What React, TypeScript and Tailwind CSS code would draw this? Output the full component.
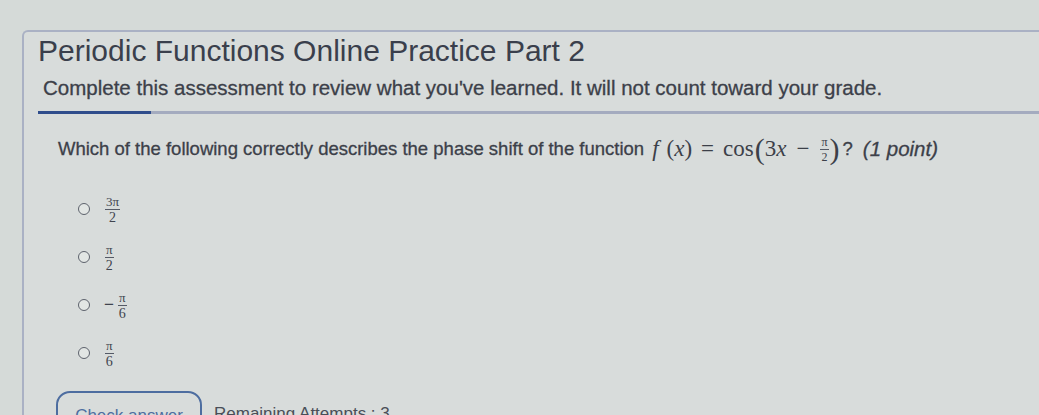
import React from "react";

const Frac = ({ n, d, small }: { n: string; d: string; small?: boolean }) => (
  <span className="inline-flex flex-col items-center align-middle leading-none mx-[1px]" style={{ fontFamily: '"Liberation Serif", serif' }}>
    <span className={small ? "text-[12px] leading-[12px] px-[1px]" : "text-[13px] leading-[13px] px-[1px]"}>{n}</span>
    <span className="block w-full h-px bg-[#555a66] my-[1px]" />
    <span className={small ? "text-[12px] leading-[12px]" : "text-[14px] leading-[13px]"}>{d}</span>
  </span>
);

const Option = ({ children }: { children: React.ReactNode }) => (
  <div className="flex items-center h-[22px] gap-[14px]">
    <span className="w-[12px] h-[12px] rounded-full border-[1.5px] border-[#5d626c] bg-[#e2e6e4]" />
    <span className="flex items-center text-[#40444e]">{children}</span>
  </div>
);

export default function App() {
  return (
    <div className="w-[1039px] h-[415px] overflow-hidden bg-[#d5dad8] pt-[30px] pl-[22px]" style={{ fontFamily: '"Liberation Sans", Arial, sans-serif' }}>
      <div className="border-t-2 border-l-2 border-[#aab1c4] rounded-tl-[6px] h-[420px] bg-[#d8dcdb]">
        <div className="pl-[14px] pt-[3px]">
          <h1 className="text-[30px] leading-[32px] text-[#3a3f4c]">Periodic Functions Online Practice Part 2</h1>
          <p className="text-[20.5px] leading-[24px] mt-[9px] ml-[5px] text-[#3c4049]" style={{ WebkitTextStroke: "0.3px #3c4049" }}>
            Complete this assessment to review what you've learned. It will not count toward your grade.
          </p>
        </div>
        <div className="flex mt-[11px] ml-[14px] h-[3px]">
          <div className="w-[113px] bg-[#2f4d8c]" />
          <div className="flex-1 bg-[#a4abbf]" />
        </div>
        <div className="pl-[34px] pt-[20px] text-[#3c4049]">
          <p className="text-[18.5px] leading-[30px] flex items-center" style={{ WebkitTextStroke: "0.3px #3c4049" }}>
            <span>Which of the following correctly describes the phase shift of the function</span>
            <span className="ml-[8px] flex items-center text-[23px]" style={{ fontFamily: '"Liberation Serif", serif', WebkitTextStroke: "0px" }}>
              <i>f</i>
              <span className="ml-[8px]">(</span>
              <i>x</i>
              <span>)</span>
              <span className="mx-[9px]">=</span>
              <span>cos</span>
              <span className="text-[30px] leading-none ml-[1px]">(</span>
              <span>3</span>
              <i>x</i>
              <span className="mx-[10px]">−</span>
              <Frac n="π" d="2" small />
              <span className="text-[30px] leading-none">)</span>
            </span>
            <span className="ml-[3px]">?</span>
            <span className="ml-[10px] italic text-[20.5px]">(1 point)</span>
          </p>
          <div className="mt-[34px] ml-[20px] flex flex-col gap-[26px]">
            <Option><Frac n="3π" d="2" /></Option>
            <Option><Frac n="π" d="2" /></Option>
            <Option><span className="text-[17px] mr-[3px]">−</span><Frac n="π" d="6" /></Option>
            <Option><Frac n="π" d="6" /></Option>
          </div>
          <div className="flex items-start mt-[27px] ml-[-2px] gap-[12px]">
            <button className="w-[146px] h-[40px] rounded-[14px] border-2 border-[#4d6da0] text-[17px] text-[#4d6da0] pt-[10px] flex justify-center">
              Check answer
            </button>
            <span className="text-[17px] pt-[10px] text-[#4a4e58]">Remaining Attempts : 3</span>
          </div>
        </div>
      </div>
    </div>
  );
}
